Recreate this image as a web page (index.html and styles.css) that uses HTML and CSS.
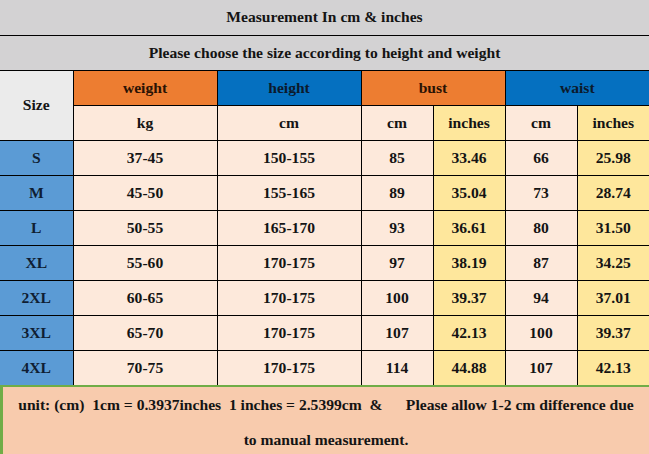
FILE: index.html
```html
<!DOCTYPE html>
<html>
<head>
<meta charset="utf-8">
<link rel="stylesheet" href="styles.css">
</head>
<body>
<table class="chart">
  <colgroup>
    <col class="c-size"><col class="c-wide"><col class="c-wide"><col class="c-narrow"><col class="c-narrow"><col class="c-narrow"><col class="c-narrow">
  </colgroup>
  <tr class="title"><td colspan="7">Measurement In cm &amp; inches</td></tr>
  <tr class="title"><td colspan="7">Please choose the size according to height and weight</td></tr>
  <tr>
    <td rowspan="2" class="size-head">Size</td>
    <td class="orange">weight</td>
    <td class="blue">height</td>
    <td colspan="2" class="orange">bust</td>
    <td colspan="2" class="blue last">waist</td>
  </tr>
  <tr>
    <td class="peach">kg</td>
    <td class="peach">cm</td>
    <td class="peach">cm</td>
    <td class="yellow">inches</td>
    <td class="peach">cm</td>
    <td class="yellow last">inches</td>
  </tr>
  <tr><td class="size">S</td><td class="peach">37-45</td><td class="peach">150-155</td><td class="peach">85</td><td class="yellow">33.46</td><td class="peach">66</td><td class="yellow last">25.98</td></tr>
  <tr><td class="size">M</td><td class="peach">45-50</td><td class="peach">155-165</td><td class="peach">89</td><td class="yellow">35.04</td><td class="peach">73</td><td class="yellow last">28.74</td></tr>
  <tr><td class="size">L</td><td class="peach">50-55</td><td class="peach">165-170</td><td class="peach">93</td><td class="yellow">36.61</td><td class="peach">80</td><td class="yellow last">31.50</td></tr>
  <tr><td class="size">XL</td><td class="peach">55-60</td><td class="peach">170-175</td><td class="peach">97</td><td class="yellow">38.19</td><td class="peach">87</td><td class="yellow last">34.25</td></tr>
  <tr><td class="size">2XL</td><td class="peach">60-65</td><td class="peach">170-175</td><td class="peach">100</td><td class="yellow">39.37</td><td class="peach">94</td><td class="yellow last">37.01</td></tr>
  <tr><td class="size">3XL</td><td class="peach">65-70</td><td class="peach">170-175</td><td class="peach">107</td><td class="yellow">42.13</td><td class="peach">100</td><td class="yellow last">39.37</td></tr>
  <tr class="final"><td class="size">4XL</td><td class="peach">70-75</td><td class="peach">170-175</td><td class="peach">114</td><td class="yellow">44.88</td><td class="peach">107</td><td class="yellow last">42.13</td></tr>
</table>
<div class="note">
  <p>unit: (cm)&nbsp; 1cm = 0.3937inches&nbsp; 1 inches = 2.5399cm&nbsp; &amp;&nbsp;&nbsp;&nbsp;&nbsp;&nbsp; Please allow 1-2 cm difference due</p>
  <p>to manual measurement.</p>
</div>
</body>
</html>
```
FILE: styles.css
```css
html, body {
  margin: 0;
  padding: 0;
  background: #ffffff;
}
body {
  width: 649px;
  height: 454px;
  overflow: hidden;
  font-family: "Liberation Serif", "Times New Roman", serif;
  font-weight: bold;
  font-size: 15.6px;
  color: #141414;
}
.chart {
  width: 649px;
  border-collapse: collapse;
  table-layout: fixed;
}
.c-size { width: 73px; }
.c-wide { width: 144px; }
.c-narrow { width: 72px; }
.chart td {
  height: 35px;
  padding: 0;
  text-align: center;
  vertical-align: middle;
  border-right: 1px solid #000;
  border-bottom: 1px solid #000;
  box-sizing: border-box;
}
.chart td.last { border-right: none; }
.chart tr.final td { border-bottom: none; }
.chart tr.title td {
  background: #d3d2d3;
  border-right: none;
}
.size-head { background: #ebebeb; }
.orange { background: #ed7d31; color: #2a1204; }
.blue { background: #0570c0; color: #0c1a2c; }
.peach { background: #fde9db; }
.yellow { background: #fee79c; }
.size { background: #5b9bd5; color: #0f1e33; }
.note {
  height: 70px;
  box-sizing: border-box;
  background: #f8cbad;
  border-top: 2px solid #70ad47;
  border-left: 3px solid #70ad47;
  text-align: center;
}
.note p {
  margin: 0;
  line-height: 35px;
  white-space: nowrap;
}
```
